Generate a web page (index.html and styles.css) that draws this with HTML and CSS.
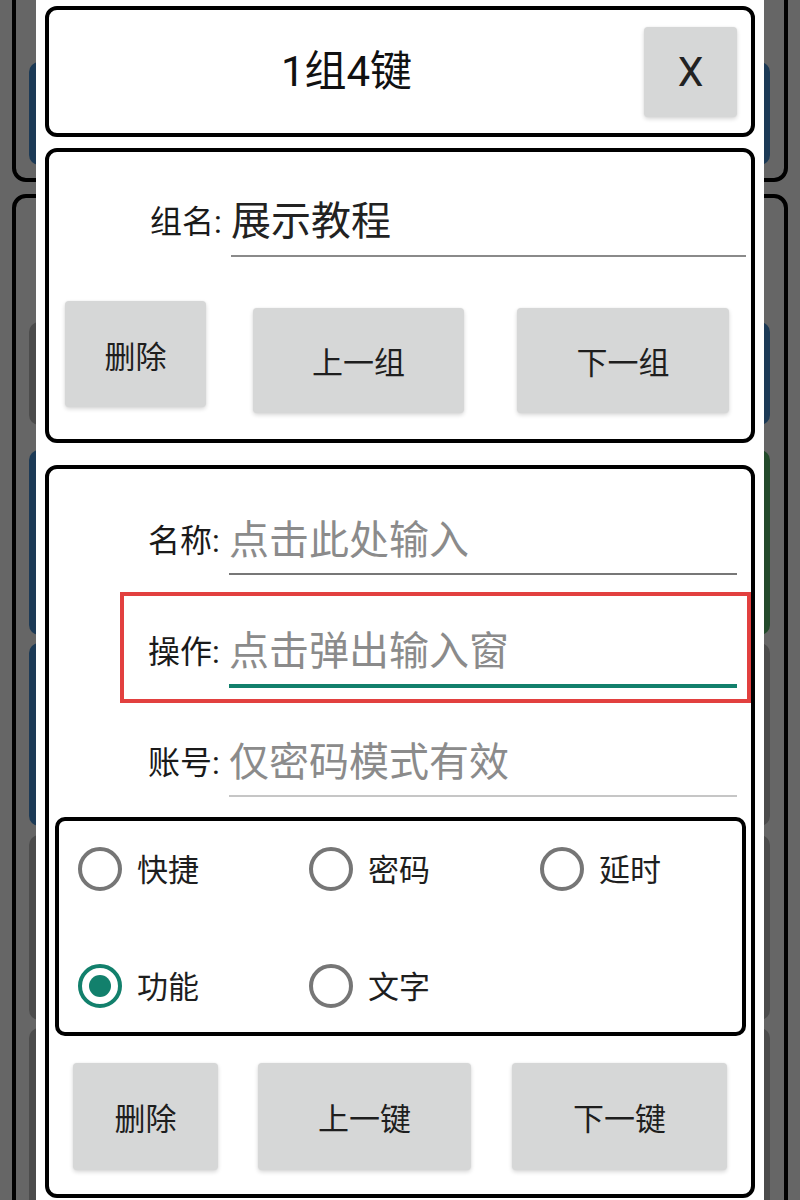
FILE: index.html
```html
<!DOCTYPE html>
<html lang="zh-CN">
<head>
<meta charset="utf-8">
<title>1组4键</title>
<link rel="stylesheet" href="styles.css">
</head>
<body>
<div class="page">
  <section class="bg-card bg-card-first">
    <div class="bg-row h103"><span class="bg-btn blue"></span><span class="bg-btn blue"></span></div>
  </section>
  <section class="bg-card bg-card-second">
    <div class="bg-row h103"><span class="bg-btn grey"></span><span class="bg-btn blue"></span></div>
    <div class="bg-row h185 gap25"><span class="bg-btn blue"></span><span class="bg-btn green"></span></div>
    <div class="bg-row h183 gap8"><span class="bg-btn blue"></span><span class="bg-btn grey"></span></div>
    <div class="bg-row h185 gap9"><span class="bg-btn grey"></span><span class="bg-btn grey"></span></div>
    <div class="bg-row h185 gap8"><span class="bg-btn grey"></span><span class="bg-btn grey"></span></div>
  </section>
</div>
<div class="scrim"></div>

<div class="dialog">
  <header class="card title-card">
    <h1 class="title">1组4键</h1>
    <button class="btn close-btn">X</button>
  </header>

  <section class="card group-card">
    <div class="field-row group-row">
      <span class="label">组名:</span>
      <div class="input value">展示教程</div>
    </div>
    <div class="btn-row group-btns">
      <button class="btn btn-del-group">删除</button>
      <button class="btn btn-prev-group">上一组</button>
      <button class="btn btn-next-group">下一组</button>
    </div>
  </section>

  <section class="card key-card">
    <div class="field-row key-row">
      <span class="label">名称:</span>
      <div class="input placeholder line-dark">点击此处输入</div>
    </div>
    <div class="field-row key-row op-row">
      <span class="label">操作:</span>
      <div class="input placeholder line-focus">点击弹出输入窗</div>
    </div>
    <div class="field-row key-row acct-row">
      <span class="label">账号:</span>
      <div class="input placeholder line-light">仅密码模式有效</div>
    </div>

    <div class="radio-box">
      <label class="radio"><span class="dot"></span><span class="radio-text">快捷</span></label>
      <label class="radio"><span class="dot"></span><span class="radio-text">密码</span></label>
      <label class="radio"><span class="dot"></span><span class="radio-text">延时</span></label>
      <label class="radio checked"><span class="dot"></span><span class="radio-text">功能</span></label>
      <label class="radio"><span class="dot"></span><span class="radio-text">文字</span></label>
    </div>

    <div class="btn-row key-btns">
      <button class="btn btn-del-key">删除</button>
      <button class="btn btn-prev-key">上一键</button>
      <button class="btn btn-next-key">下一键</button>
    </div>
  </section>
</div>
</body>
</html>
```

FILE: styles.css
```css
* { box-sizing: border-box; }

html, body {
  margin: 0;
  padding: 0;
  width: 800px;
  height: 1200px;
  overflow: hidden;
  background: #ffffff;
  font-family: Roboto, "Noto Sans CJK SC", sans-serif;
}

/* ---------- underlying screen ---------- */
.page {
  height: 1200px;
  overflow: hidden;
  padding: 0 12px;
}

.bg-card {
  border: 4px solid #000;
  border-radius: 14px;
  background: #fff;
  padding: 0 14px 0 13px;
}

.bg-card-first {
  margin-top: -40px;
  padding-top: 98px;
  padding-bottom: 13px;
}

.bg-card-second {
  margin-top: 12px;
  padding-top: 124px;
  height: 1100px;
}

.bg-row {
  display: flex;
  gap: 40px;
}

.bg-btn {
  flex: 1;
  border-radius: 10px;
}

.bg-btn.blue { background: #4792d6; }
.bg-btn.green { background: #58b86b; }
.bg-btn.grey { background: #bdbdbd; }

.h103 { height: 103px; }
.h183 { height: 183px; }
.h185 { height: 185px; }
.gap25 { margin-top: 25px; }
.gap8 { margin-top: 8px; }
.gap9 { margin-top: 9px; }

.scrim {
  position: fixed;
  inset: 0;
  background: rgba(0, 0, 0, 0.6);
}

/* ---------- dialog ---------- */
.dialog {
  position: fixed;
  top: 0;
  left: 36px;
  width: 728px;
  height: 1200px;
  overflow: hidden;
  background: #fff;
  padding: 6px 9px 0;
}

.card {
  border: 4px solid #000;
  border-radius: 12px;
  background: #fff;
}

.btn {
  border: none;
  margin: 0;
  padding: 0;
  background: #d6d7d7;
  border-radius: 4px;
  box-shadow: 0 2px 4px rgba(0, 0, 0, 0.16), 0 0 2px rgba(0, 0, 0, 0.06);
  color: #1e1e1e;
  font-family: Roboto, "Noto Sans CJK SC", sans-serif;
  font-size: 31px;
  display: flex;
  align-items: center;
  justify-content: center;
}

/* title */
.title-card {
  height: 131px;
  display: flex;
  align-items: center;
  padding: 17px 14px 16px 0;
}

.title {
  flex: 1;
  margin: 0;
  text-align: center;
  font-size: 42px;
  font-weight: 400;
  color: #111;
  line-height: 1;
}

.close-btn {
  width: 93px;
  height: 90px;
  font-size: 41px;
  color: #222;
}

/* fields */
.field-row {
  display: flex;
  align-items: flex-start;
}

.label {
  width: 81px;
  flex: none;
  font-size: 32px;
  line-height: 56px;
  color: #1a1a1a;
  white-space: nowrap;
}

.input {
  flex: 1;
  font-size: 40px;
  line-height: 56px;
  padding-bottom: 4px;
  border-bottom: 2px solid #8a8a8a;
  white-space: nowrap;
}

.value { color: #222; }
.placeholder { color: #8b8b8b; }

/* group card */
.group-card {
  height: 295px;
  margin-top: 11px;
  padding-top: 42px;
}

.group-row {
  padding-left: 101px;
}

.group-row .input {
  margin-right: 5px;
  padding-bottom: 5px;
}

.btn-row {
  display: flex;
  align-items: flex-start;
}

.group-btns {
  margin-top: 44px;
  padding-left: 16px;
}

.btn-del-group { width: 141px; height: 106px; }
.btn-prev-group { width: 211px; height: 105px; margin-top: 7px; margin-left: 47px; }
.btn-next-group { width: 212px; height: 105px; margin-top: 7px; margin-left: 53px; }

/* key card */
.key-card {
  height: 733px;
  margin-top: 22px;
  padding-top: 44px;
}

.key-row {
  padding-left: 99px;
}

.key-row .input {
  margin-right: 14px;
}

.key-row + .key-row { margin-top: 49px; }
.acct-row.key-row { margin-top: 47px; }

.line-dark { border-bottom-color: #777; }
.line-light { border-bottom-color: #c6c6c6; }
.line-focus { border-bottom: 4px solid #12806c; }

.op-row {
  position: relative;
}

.op-row::after {
  content: "";
  position: absolute;
  left: 71px;
  right: 0;
  top: -32px;
  bottom: -15px;
  border: 4px solid #e2403f;
  pointer-events: none;
}

/* radios */
.radio-box {
  margin: 20px 5px 0 6px;
  height: 219px;
  border: 4px solid #000;
  border-radius: 10px;
  display: grid;
  grid-template-columns: 231px 231px 1fr;
  row-gap: 73px;
  align-content: start;
  padding: 26px 0 0 19px;
}

.radio {
  display: flex;
  align-items: center;
  gap: 15px;
  height: 44px;
}

.dot {
  width: 44px;
  height: 44px;
  flex: none;
  border: 4px solid #767676;
  border-radius: 50%;
  display: flex;
  align-items: center;
  justify-content: center;
}

.radio.checked .dot {
  border-color: #12806c;
}

.radio.checked .dot::after {
  content: "";
  width: 22px;
  height: 22px;
  border-radius: 50%;
  background: #12806c;
}

.radio-text {
  font-size: 31px;
  color: #1e1e1e;
  line-height: 44px;
  padding-top: 4px;
}

.key-btns {
  margin-top: 27px;
  padding-left: 24px;
}

.btn-del-key { width: 145px; height: 107px; }
.btn-prev-key { width: 213px; height: 107px; margin-left: 40px; }
.btn-next-key { width: 215px; height: 107px; margin-left: 41px; }
```
